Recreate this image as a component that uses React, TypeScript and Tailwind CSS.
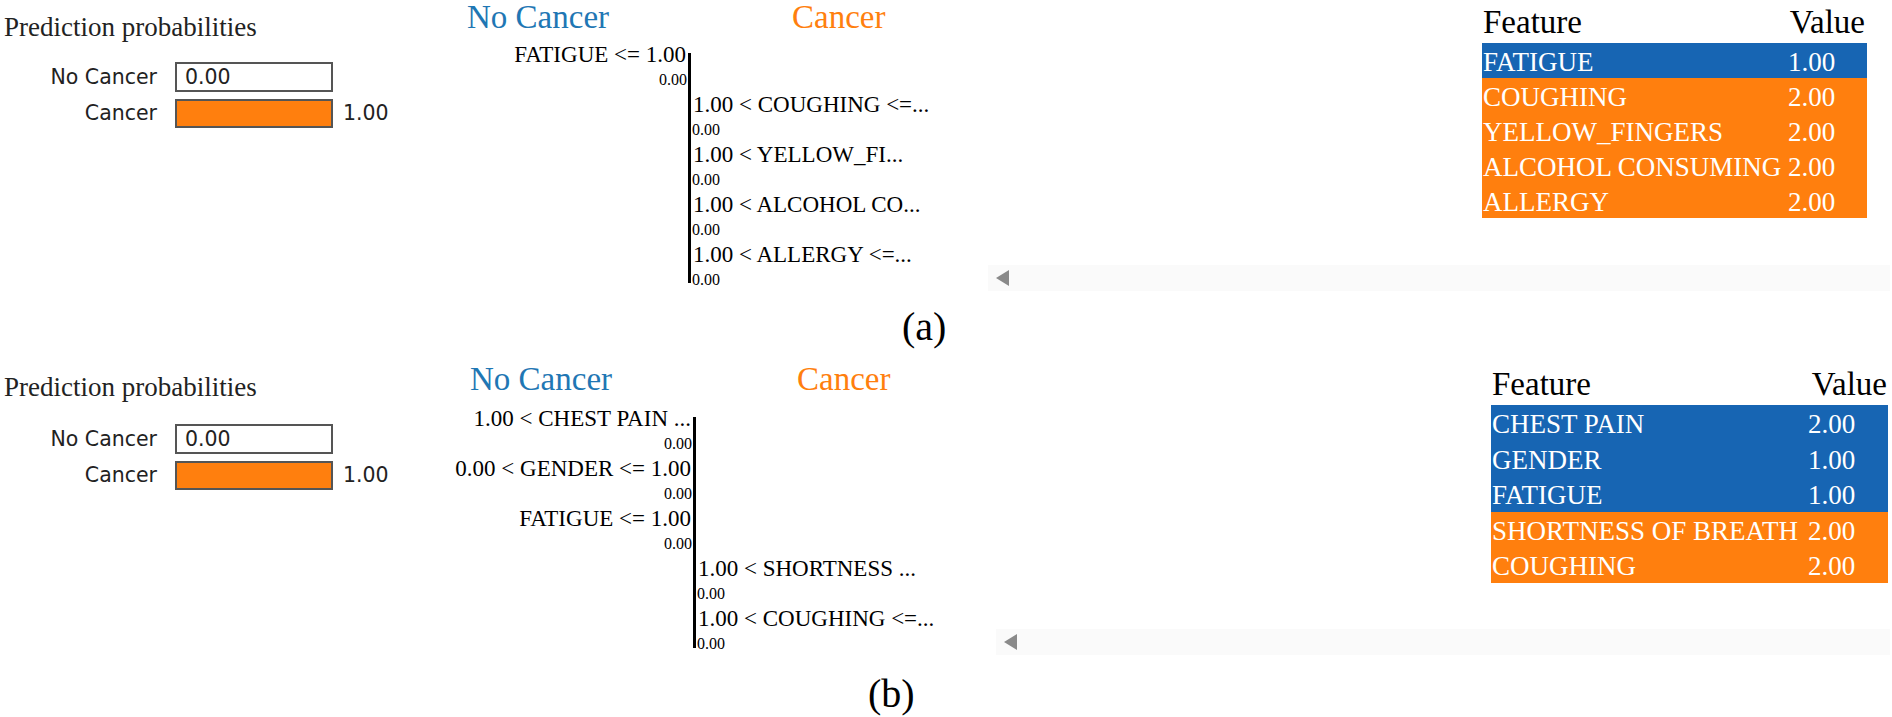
import React from "react";

const SERIF = "font-['Liberation_Serif','Times_New_Roman',serif]";
const SANS = "font-['DejaVu_Sans','Verdana',sans-serif]";

type ChartRow = { label: string; side: "left" | "right" };
type TableRow = { feature: string; value: string; blue: boolean };

function Probabilities({ gap }: { gap: string }) {
  return (
    <div className="w-[440px] shrink-0">
      <div className={`${SERIF} pl-[4px] pt-[7px] text-[27px] leading-[40px] text-[#222]`}>
        Prediction probabilities
      </div>
      <div className={`${SANS} ${gap} flex flex-col gap-[7px] text-[20.5px] text-[#222]`}>
        <div className="flex h-[30px] items-center">
          <span className="w-[157px] text-right">No Cancer</span>
          <div className="ml-[18px] flex h-[30px] w-[158px] items-center border-2 border-[#555] pl-[8px]">
            0.00
          </div>
        </div>
        <div className="flex h-[29px] items-center">
          <span className="w-[157px] text-right">Cancer</span>
          <div className="ml-[18px] h-[29px] w-[158px] border-2 border-[#555] bg-[#ff7f0e]" />
          <span className="ml-[10px]">1.00</span>
        </div>
      </div>
    </div>
  );
}

function Slot({ row, show, align }: { row: ChartRow; show: boolean; align: "left" | "right" }) {
  return (
    <div className="h-[50px]">
      {show && (
        <>
          <div className={`h-[28px] whitespace-nowrap text-[23px] leading-[28px] ${align === "left" ? "pr-[2px]" : "pl-[2px]"}`}>
            {row.label}
          </div>
          <div className={`h-[22px] text-[16px] leading-[22px] ${align === "left" ? "pr-[1px]" : "pl-[1px]"}`}>0.00</div>
        </>
      )}
    </div>
  );
}

function Chart(props: {
  rows: ChartRow[];
  width: string;
  leftW: string;
  headPad: string;
  cancerW: string;
  head: string;
  axis: string;
}) {
  const { rows, width, leftW, headPad, cancerW, head, axis } = props;
  return (
    <div className={`${SERIF} shrink-0 ${width} text-black`}>
      <div className={`flex ${head} text-[33px] leading-[34px]`}>
        <span className={`${headPad} ${cancerW} text-[#1f77b4]`}>No Cancer</span>
        <span className="text-[#ff7f0e]">Cancer</span>
      </div>
      <div className="flex">
        <div className={`${leftW} shrink-0 text-right`}>
          {rows.map((r, i) => (
            <Slot key={i} row={r} show={r.side === "left"} align="left" />
          ))}
        </div>
        <div className={`w-[3px] shrink-0 bg-black ${axis}`} />
        <div className="flex-1">
          {rows.map((r, i) => (
            <Slot key={i} row={r} show={r.side === "right"} align="right" />
          ))}
        </div>
      </div>
    </div>
  );
}

function FeatureTable(props: {
  rows: TableRow[];
  box: string;
  featW: string;
  head: string;
  valueCell: string;
  rowH: string;
}) {
  const { rows, box, featW, head, valueCell, rowH } = props;
  return (
    <div className={`${SERIF} ${box}`}>
      <div className={`flex justify-between ${head} text-[33px] leading-[36px] text-black`}>
        <span className="pl-[1px]">Feature</span>
        <span>Value</span>
      </div>
      {rows.map((r) => (
        <div
          key={r.feature}
          className={`flex ${rowH} text-[27px] leading-[39px] text-white ${r.blue ? "bg-[#1765b3]" : "bg-[#ff7f0e]"}`}
        >
          <span className={`${featW} shrink-0 whitespace-nowrap pl-[1px]`}>{r.feature}</span>
          <span className={valueCell}>{r.value}</span>
        </div>
      ))}
    </div>
  );
}

function Scrollbar() {
  return (
    <div className="mr-[2px] mt-auto flex h-[26px] items-center bg-[#fafafa] pl-[8px]">
      <div className="h-0 w-0 border-y-[8px] border-r-[13px] border-y-transparent border-r-[#8a8a8a]" />
    </div>
  );
}

const rowsA: ChartRow[] = [
  { label: "FATIGUE <= 1.00", side: "left" },
  { label: "1.00 < COUGHING <=...", side: "right" },
  { label: "1.00 < YELLOW_FI...", side: "right" },
  { label: "1.00 < ALCOHOL CO...", side: "right" },
  { label: "1.00 < ALLERGY <=...", side: "right" },
];

const rowsB: ChartRow[] = [
  { label: "1.00 < CHEST PAIN ...", side: "left" },
  { label: "0.00 < GENDER <= 1.00", side: "left" },
  { label: "FATIGUE <= 1.00", side: "left" },
  { label: "1.00 < SHORTNESS ...", side: "right" },
  { label: "1.00 < COUGHING <=...", side: "right" },
];

const tableA: TableRow[] = [
  { feature: "FATIGUE", value: "1.00", blue: true },
  { feature: "COUGHING", value: "2.00", blue: false },
  { feature: "YELLOW_FINGERS", value: "2.00", blue: false },
  { feature: "ALCOHOL CONSUMING", value: "2.00", blue: false },
  { feature: "ALLERGY", value: "2.00", blue: false },
];

const tableB: TableRow[] = [
  { feature: "CHEST PAIN", value: "2.00", blue: true },
  { feature: "GENDER", value: "1.00", blue: true },
  { feature: "FATIGUE", value: "1.00", blue: true },
  { feature: "SHORTNESS OF BREATH", value: "2.00", blue: false },
  { feature: "COUGHING", value: "2.00", blue: false },
];

export default function App() {
  return (
    <div className="h-[717px] w-[1892px] overflow-hidden bg-white">
      {/* Panel (a) */}
      <div className="flex h-[291px]">
        <Probabilities gap="mt-[15px]" />
        <Chart
          rows={rowsA}
          width="w-[548px]"
          leftW="w-[248px]"
          headPad="ml-[27px]"
          cancerW="w-[325px]"
          head="h-[41px]"
          axis="mt-[12px] mb-[8px]"
        />
        <div className="flex flex-1 flex-col">
          <FeatureTable
            rows={tableA}
            box="ml-[494px] w-[385px]"
            featW="w-[306px]"
            head="h-[43px] pt-[4px] pr-[2px]"
            valueCell="pl-0"
            rowH="h-[35px]"
          />
          <Scrollbar />
        </div>
      </div>
      <div className={`${SERIF} mt-[12px] h-[48px] pl-[902px] text-[40px] leading-[48px] text-black`}>(a)</div>

      {/* Panel (b) */}
      <div className="mt-[9px] flex h-[295px]">
        <Probabilities gap="mt-[17px]" />
        <Chart
          rows={rowsB}
          width="w-[556px]"
          leftW="w-[253px]"
          headPad="ml-[30px]"
          cancerW="w-[327px]"
          head="h-[45px] pt-[2px]"
          axis="mt-[12px] mb-[7px]"
        />
        <div className="flex flex-1 flex-col">
          <FeatureTable
            rows={tableB}
            box="ml-[495px] w-[397px]"
            featW="w-[314px]"
            head="h-[45px] pt-[6px] pr-[1px]"
            valueCell="pl-[3px]"
            rowH="h-[35.5px]"
          />
          <Scrollbar />
        </div>
      </div>
      <div className={`${SERIF} mt-[15px] h-[48px] pl-[868px] text-[40px] leading-[48px] text-black`}>(b)</div>
    </div>
  );
}
